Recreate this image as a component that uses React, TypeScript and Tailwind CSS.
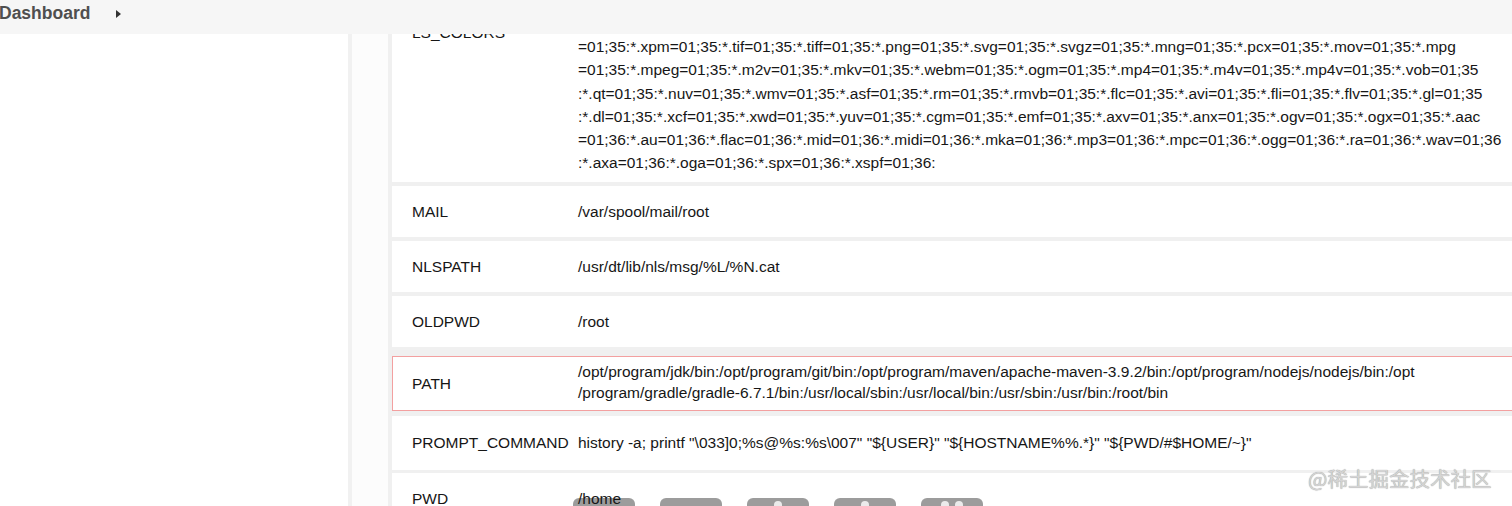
type EnvRow = {
  name: string
  lines: string[]
  highlight?: boolean
}

const lsColors = [
  'rs=0:di=01;34:ln=01;36:mh=00:pi=40;33:so=01;35:do=01;35:bd=40;33;01:cd=40;33;01:or=40;31;01:mi=01;05;37;41:su=37;41',
  ':sg=30;43:ca=30;41:tw=30;42:ow=34;42:st=37;44:ex=01;32:*.tar=01;31:*.tgz=01;31:*.arc=01;31:*.arj=01;31:*.taz=01;31',
  ':*.lha=01;31:*.lz4=01;31:*.lzh=01;31:*.lzma=01;31:*.tlz=01;31:*.txz=01;31:*.tzo=01;31:*.t7z=01;31:*.zip=01;31:*.z=01;31',
  ':*.Z=01;31:*.dz=01;31:*.gz=01;31:*.lrz=01;31:*.lz=01;31:*.lzo=01;31:*.xz=01;31:*.bz2=01;31:*.bz=01;31:*.tbz=01;31',
  ':*.tbz2=01;31:*.tz=01;31:*.deb=01;31:*.rpm=01;31:*.jar=01;31:*.war=01;31:*.ear=01;31:*.sar=01;31:*.rar=01;31:*.alz',
  '=01;31:*.ace=01;31:*.zoo=01;31:*.cpio=01;31:*.7z=01;31:*.rz=01;31:*.cab=01;31:*.jpg=01;35:*.jpeg=01;35:*.gif=01;35:*.bmp=01;35:*.pbm',
  '=01;35:*.xpm=01;35:*.tif=01;35:*.tiff=01;35:*.png=01;35:*.svg=01;35:*.svgz=01;35:*.mng=01;35:*.pcx=01;35:*.mov=01;35:*.mpg',
  '=01;35:*.mpeg=01;35:*.m2v=01;35:*.mkv=01;35:*.webm=01;35:*.ogm=01;35:*.mp4=01;35:*.m4v=01;35:*.mp4v=01;35:*.vob=01;35',
  ':*.qt=01;35:*.nuv=01;35:*.wmv=01;35:*.asf=01;35:*.rm=01;35:*.rmvb=01;35:*.flc=01;35:*.avi=01;35:*.fli=01;35:*.flv=01;35:*.gl=01;35',
  ':*.dl=01;35:*.xcf=01;35:*.xwd=01;35:*.yuv=01;35:*.cgm=01;35:*.emf=01;35:*.axv=01;35:*.anx=01;35:*.ogv=01;35:*.ogx=01;35:*.aac',
  '=01;36:*.au=01;36:*.flac=01;36:*.mid=01;36:*.midi=01;36:*.mka=01;36:*.mp3=01;36:*.mpc=01;36:*.ogg=01;36:*.ra=01;36:*.wav=01;36',
  ':*.axa=01;36:*.oga=01;36:*.spx=01;36:*.xspf=01;36:',
]

const rows: EnvRow[] = [
  { name: 'MAIL', lines: ['/var/spool/mail/root'] },
  { name: 'NLSPATH', lines: ['/usr/dt/lib/nls/msg/%L/%N.cat'] },
  { name: 'OLDPWD', lines: ['/root'] },
  {
    name: 'PATH',
    highlight: true,
    lines: [
      '/opt/program/jdk/bin:/opt/program/git/bin:/opt/program/maven/apache-maven-3.9.2/bin:/opt/program/nodejs/nodejs/bin:/opt',
      '/program/gradle/gradle-6.7.1/bin:/usr/local/sbin:/usr/local/bin:/usr/sbin:/usr/bin:/root/bin',
    ],
  },
]

function Row({ row }: { row: EnvRow }) {
  return (
    <div
      className={
        row.highlight
          ? 'mt-[5px] flex h-[55px] items-center border border-[#f3a0a0] bg-white pl-[19px]'
          : 'flex h-[51px] items-center bg-white pl-[20px]'
      }
    >
      <div className="w-[166px] shrink-0">{row.name}</div>
      <div className={row.highlight ? 'relative z-20 mb-[4px] leading-[21px]' : 'relative z-20 leading-[21px]'}>
        {row.lines.map((line, i) => (
          <div key={i} className="whitespace-nowrap">
            {line}
          </div>
        ))}
      </div>
    </div>
  )
}

export default function App() {
  return (
    <div className="relative h-[506px] w-[1512px] overflow-hidden bg-white font-['Liberation_Sans',Arial,sans-serif] text-[15.5px] text-[#161616]">
      <header className="flex h-[34px] items-center bg-[#f6f6f6] pb-[7px]">
        <span className="-ml-[1px] text-[17.5px] font-bold text-[#4f4f4f]">Dashboard</span>
        <svg className="ml-[26px]" width="5" height="8" viewBox="0 0 5 8">
          <path d="M0 0 L5 4 L0 8 Z" fill="#333" />
        </svg>
      </header>

      <div className="flex h-[472px]">
        <aside className="w-[352px] shrink-0 border-r-[4px] border-[#f1f1f1] bg-white" />
        <main className="flex-1 overflow-hidden bg-[#fcfcfc] pl-[36px]">
          <div className="-mt-[151px] flex w-[1160px] flex-col gap-[4px] bg-[#f0f0f0] pl-[4px]">
            <div className="flex h-[299px] items-center bg-white pl-[20px]">
              <div className="w-[166px] shrink-0">LS_COLORS</div>
              <div className="self-stretch pt-[13px] pb-[8px] leading-[23.2px]">
                {lsColors.map((line, i) => (
                  <div key={i} className="whitespace-nowrap">
                    {line}
                  </div>
                ))}
              </div>
            </div>
            {rows.map((row) => (
              <Row key={row.name} row={row} />
            ))}
            <div className="mt-[1px] flex h-[54px] items-center bg-white pl-[20px]">
              <div className="w-[166px] shrink-0">PROMPT_COMMAND</div>
              <div className="whitespace-nowrap">
                {'history -a; printf "\\033]0;%s@%s:%s\\007" "${USER}" "${HOSTNAME%%.*}" "${PWD/#$HOME/~}"'}
              </div>
            </div>
            <div className="-mt-[1px] flex h-[52px] items-center bg-white pl-[20px]">
              <div className="w-[166px] shrink-0">PWD</div>
              <div className="relative z-20 whitespace-nowrap">/home</div>
            </div>
          </div>
        </main>
      </div>

      <div className="absolute top-[498px] left-[573px] z-10 flex gap-[25px]">
        {[0, 1, 2, 3, 4].map((i) => (
          <div key={i} className="flex h-[20px] w-[62px] justify-center gap-[6px] rounded-t-[6px] bg-[#9c9c9c]">
            {i >= 2 && <span className="mt-[3px] h-[8px] w-[8px] rounded-full bg-white/80" />}
            {i === 4 && <span className="mt-[3px] h-[8px] w-[8px] rounded-full bg-white/80" />}
          </div>
        ))}
      </div>

      <div className="absolute top-[463px] left-[1308px] z-10 font-['Noto_Sans_CJK_SC',sans-serif] text-[20.5px] text-[#d4d4d4] [text-shadow:0_0_1px_#8a8a8a]">
        @稀土掘金技术社区
      </div>
    </div>
  )
}
